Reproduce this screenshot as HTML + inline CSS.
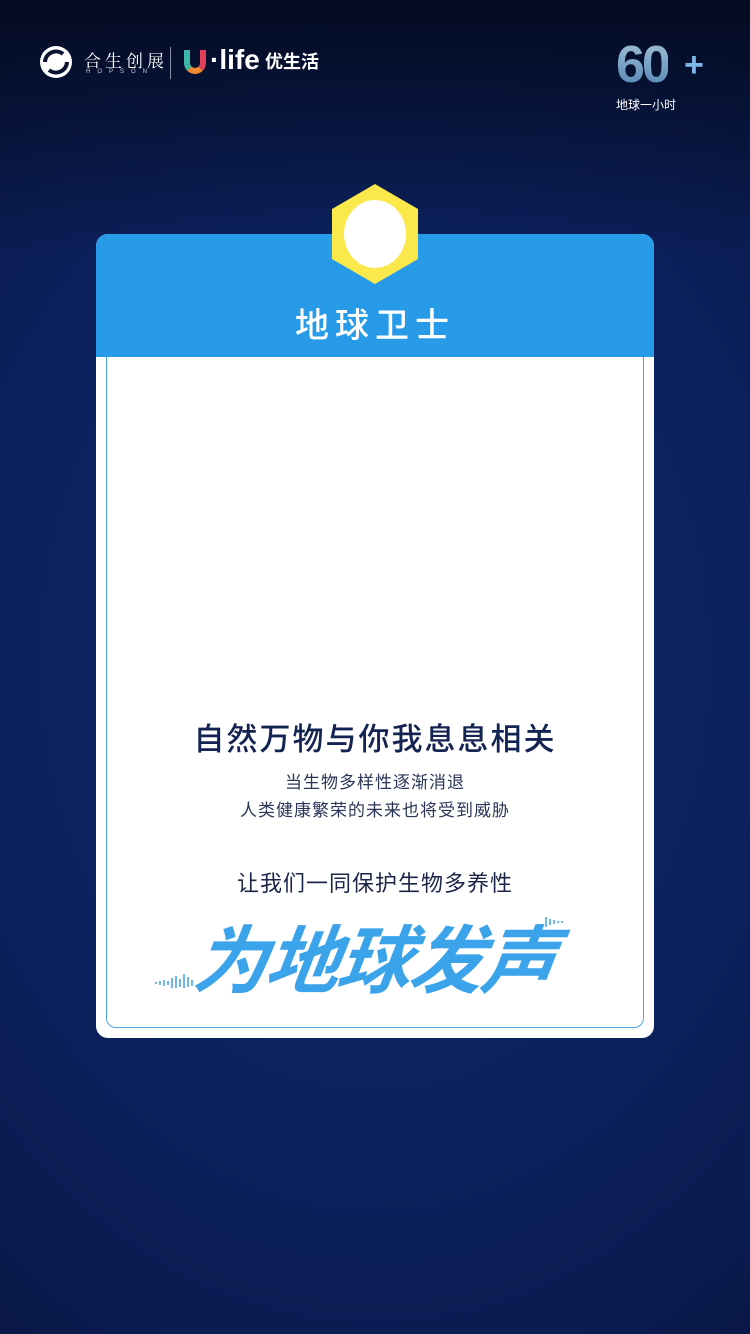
<!DOCTYPE html>
<html><head><meta charset="utf-8"><style>
*{margin:0;padding:0;box-sizing:border-box}
body{width:750px;height:1334px;overflow:hidden;position:relative;font-family:"Liberation Sans","Noto Sans CJK SC",sans-serif;
background:radial-gradient(ellipse 700px 900px at 375px 660px,#11306e 0%,#0c2260 50%,#0a1c50 80%,#081540 100%);}
.top{position:absolute;left:0;top:0;width:750px;height:260px;background:linear-gradient(#040b22,rgba(4,11,34,0))}
.card{position:absolute;left:96px;top:234px;width:558px;height:804px;background:#fff;border-radius:12px;overflow:hidden}
.hd{position:absolute;left:0;top:0;width:558px;height:123px;background:#289be8}
.hd h1{position:absolute;top:64px;left:0;width:100%;text-align:center;color:#fff;font-size:34px;font-weight:500;letter-spacing:6px}
.inner{position:absolute;left:10px;top:123px;width:538px;height:671px;border:1.5px solid #4fa3e4;border-top:none;border-radius:0 0 10px 10px}
.t1{position:absolute;top:480px;left:0;width:100%;text-align:center;font-size:31px;color:#142452;font-weight:500;letter-spacing:2px}
.t2{position:absolute;top:535px;left:0;width:100%;text-align:center;font-size:17px;color:#2a3558;line-height:28px;letter-spacing:1px}
.t3{position:absolute;top:632px;left:0;width:100%;text-align:center;font-size:22px;color:#1c2648;letter-spacing:1px}
.big{position:absolute;top:668px;left:0;width:100%;text-align:center;font-size:74px;font-weight:bold;color:#3aa3ea;font-style:italic;letter-spacing:-2px;transform:skewX(-8deg)}
</style></head><body>
<div class="top"></div>
<svg style="position:absolute;left:35px;top:45px" width="42" height="34" viewBox="0 0 42 34"><circle cx="21" cy="17" r="16" fill="#fff"/><path d="M10 17a11 11 0 0 1 18-8 M32 17a11 11 0 0 1-18 8" stroke="#0a1430" stroke-width="4" fill="none"/></svg>
<div style="position:absolute;left:84px;top:47px;color:#fff;font-size:17px;letter-spacing:4px;font-family:'Noto Serif CJK SC',serif">合生创展</div>
<div style="position:absolute;left:86px;top:69px;color:#ccd;font-size:6px;letter-spacing:7px">HOPSON</div>
<div style="position:absolute;left:170px;top:47px;width:1px;height:32px;background:#8891a8"></div>
<div style="position:absolute;left:184px;top:50px;width:22px;height:24px;border:6px solid #e0405a;border-top:none;border-radius:0 0 11px 11px;border-left-color:#3bb8a8;border-bottom-color:#f28a2e"></div>
<div style="position:absolute;left:210px;top:44px;color:#fff;font-size:28px;font-weight:bold">·life</div>
<div style="position:absolute;left:265px;top:48px;color:#fff;font-size:18px;font-weight:bold">优生活</div>
<div style="position:absolute;left:616px;top:35px;font-size:52px;font-weight:bold;letter-spacing:-3px;background:linear-gradient(#a8c4d8,#4a7fb0);-webkit-background-clip:text;color:transparent">60</div>
<div style="position:absolute;left:684px;top:46px;font-size:34px;font-weight:bold;color:#7fb8e8">+</div>
<div style="position:absolute;left:616px;top:96px;font-size:12px;color:#fff">地球一小时</div>
<div class="card">
<div class="hd"><h1>地球卫士</h1></div>
<div class="inner"></div>
<div class="t1">自然万物与你我息息相关</div>
<div class="t2">当生物多样性逐渐消退<br>人类健康繁荣的未来也将受到威胁</div>
<div class="t3">让我们一同保护生物多养性</div>
<div class="big">为地球发声</div>
<svg style="position:absolute;left:58px;top:736px" width="40" height="20"><g stroke="#3aa3ea" stroke-width="1.5"><path d="M2 12v2M6 11v4M10 10v6M14 11v4M18 8v10M22 6v12M26 9v8M30 4v14M34 7v10M38 10v6"/></g></svg>
<svg style="position:absolute;left:448px;top:681px" width="24" height="14"><g stroke="#3aa3ea" stroke-width="1.5"><path d="M2 2v10M6 4v6M10 5v4M14 6v2M18 6v2"/></g></svg>
</div>
<svg style="position:absolute;left:330px;top:184px" width="90" height="100" viewBox="0 0 90 100"><polygon points="45,0 88,25 88,75 45,100 2,75 2,25" fill="#fbe84a"/><ellipse cx="45" cy="50" rx="31" ry="34" fill="#fff"/></svg>
</body></html>
